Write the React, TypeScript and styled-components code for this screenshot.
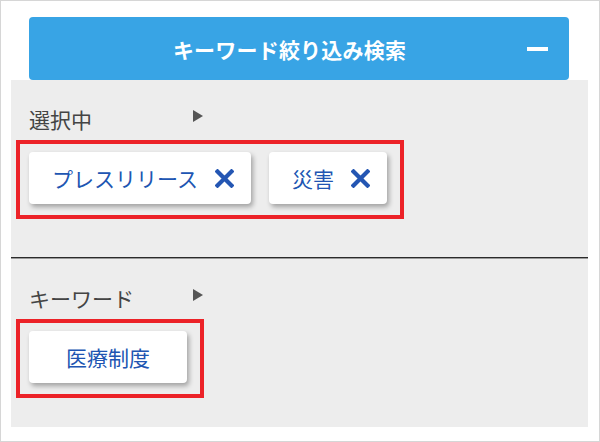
import React from "react";
import styled, { createGlobalStyle } from "styled-components";

const GlobalStyle = createGlobalStyle`
  html, body { margin: 0; padding: 0; background: #fff; }
  body { font-family: "Noto Sans CJK JP", "Noto Sans", sans-serif; }
  * { box-sizing: border-box; }
`;

const Frame = styled.div`
  width: 600px;
  height: 442px;
  border: 1px solid #d6d6d6;
  background: #fff;
  padding: 16px 0 12px;
`;

const Header = styled.div`
  margin: 0 30px 0 28px;
  height: 63px;
  background: #38a4e5;
  border-radius: 4px;
  display: flex;
  align-items: center;
  padding: 0 21px 0 23px;
`;

const Title = styled.div`
  flex: 1;
  text-align: center;
  color: #fff;
  font-size: 21px;
  font-weight: 700;
  letter-spacing: 0.2px;
`;

const Minus = styled.span`
  display: block;
  width: 21px;
  height: 4px;
  background: #fff;
`;

const Panel = styled.div`
  margin: 0 11px 0 10px;
  background: #ededed;
`;

const Section = styled.div<{ $bottom: number }>`
  padding: 25px 0 ${(p) => p.$bottom}px 5px;
`;

const LabelRow = styled.div`
  margin-left: 13px;
  width: 174px;
  height: 28px;
  display: flex;
  align-items: center;
  justify-content: space-between;
`;

const Label = styled.span`
  font-size: 21px;
  line-height: 28px;
  color: #444;
`;

const Arrow = styled.span`
  width: 0;
  height: 0;
  border-top: 6px solid transparent;
  border-bottom: 6px solid transparent;
  border-left: 10px solid #555;
  margin-bottom: 7px;
`;

const Highlight = styled.div`
  margin-top: 7px;
  display: inline-flex;
  gap: 18px;
  border: 4px solid #ec2228;
  padding: 8px 13px 11px 9px;
`;

const Chip = styled.div<{ $center?: boolean }>`
  height: 52px;
  display: flex;
  align-items: center;
  gap: 17px;
  padding: ${(p) => (p.$center ? "0 37px" : "0 17px 0 23px")};
  background: #fff;
  border-radius: 4px;
  box-shadow: 2px 3px 5px rgba(0, 0, 0, 0.32);
  color: #2055b2;
  font-size: 21px;
  line-height: 1;
`;

const Divider = styled.div`
  height: 2px;
  border-top: 1px solid #2b2b2b;
  border-bottom: 1px solid #9a9a9a;
`;

const CloseIcon = () => (
  <svg width="19" height="19" viewBox="0 0 19 19" aria-hidden>
    <path
      d="M2.5 2.5 L16.5 16.5 M16.5 2.5 L2.5 16.5"
      stroke="#2456b3"
      strokeWidth="4.2"
      strokeLinecap="square"
      fill="none"
    />
  </svg>
);

export default function App() {
  return (
    <>
      <GlobalStyle />
      <Frame>
        <Header>
          <Title>キーワード絞り込み検索</Title>
          <Minus />
        </Header>
        <Panel>
          <Section $bottom={38}>
            <LabelRow>
              <Label>選択中</Label>
              <Arrow />
            </LabelRow>
            <Highlight>
              <Chip>
                プレスリリース
                <CloseIcon />
              </Chip>
              <Chip>
                災害
                <CloseIcon />
              </Chip>
            </Highlight>
          </Section>
          <Divider />
          <Section $bottom={29}>
            <LabelRow>
              <Label>キーワード</Label>
              <Arrow />
            </LabelRow>
            <Highlight>
              <Chip $center>医療制度</Chip>
            </Highlight>
          </Section>
        </Panel>
      </Frame>
    </>
  );
}
